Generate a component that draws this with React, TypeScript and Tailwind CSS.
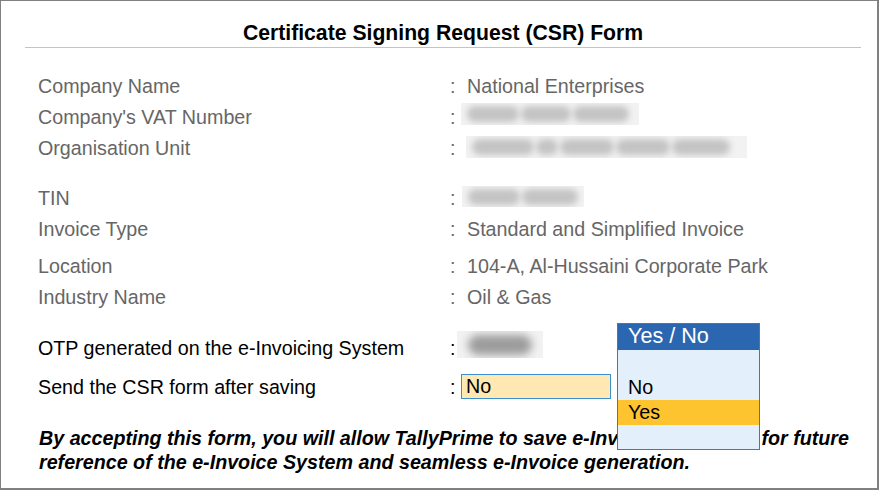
import { ReactNode } from "react";

const FONT = "font-['Liberation_Sans',Arial,sans-serif]";

interface RowProps {
    label: string;
    children?: ReactNode;
    dark?: boolean;
    className?: string;
}

function Row({ label, children, dark, className = "" }: RowProps) {
    return (
        <div className={`flex h-[31px] leading-[31px] ${dark ? "text-black" : "text-[#666666]"} ${className}`}>
            <div className="w-[412px] shrink-0">{label}</div>
            <div className="w-[17px] shrink-0">:</div>
            {children}
        </div>
    );
}

// blurred-out value, a light box with soft grey blobs in it
function Blurred({ blobs, className, dark }: { blobs: number[]; className: string; dark?: boolean }) {
    return (
        <div className={`flex items-center gap-[2px] overflow-hidden bg-[#f2f2f2] px-[6px] ${className}`}>
            {blobs.map((w, i) => (
                <div
                    key={i}
                    style={{ width: w }}
                    className={`shrink-0 rounded-full ${dark ? "h-[20px] bg-[#9c9c9c] blur-[4px]" : "h-[16px] bg-[#c4c4c4] blur-[3px]"}`}
                />
            ))}
        </div>
    );
}

export default function App() {
    return (
        <div className={`relative h-[490px] w-[879px] border-t border-l border-r-2 border-b-2 border-[#808080] bg-white text-[19.7px] ${FONT}`}>
            <div className="pt-[18px]">
                <div className="ml-[24px] h-[29px] w-[836px] border-b border-[#c4c4c4] text-center text-[21.2px] font-bold leading-[28px] text-black">
                    Certificate Signing Request (CSR) Form
                </div>
            </div>

            <div className="mt-[23px] pl-[37px]">
                <Row label="Company Name">National Enterprises</Row>
                <Row label="Company's VAT Number">
                    <Blurred blobs={[52, 50, 56]} className="-ml-[6px] mt-[1px] h-[22px] w-[178px]" />
                </Row>
                <Row label="Organisation Unit">
                    <Blurred blobs={[62, 22, 54, 54, 58]} className="-ml-[1px] mt-[3px] h-[22px] w-[281px]" />
                </Row>

                <Row label="TIN" className="mt-[19px]">
                    <Blurred blobs={[52, 56]} className="-ml-[5px] mt-[3px] h-[21px] w-[122px]" />
                </Row>
                <Row label="Invoice Type">Standard and Simplified Invoice</Row>
                <Row label="Location" className="mt-[6px]">104-A, Al-Hussaini Corporate Park</Row>
                <Row label="Industry Name">Oil &amp; Gas</Row>

                <Row label="OTP generated on the e-Invoicing System" dark className="mt-[20px]">
                    <Blurred blobs={[64]} dark className="-ml-[10px] -mt-[2px] h-[27px] w-[86px] justify-center" />
                </Row>
                <Row label="Send the CSR form after saving" dark className="mt-[8px]">
                    <div className="-ml-[6px] mt-[2px] h-[25px] w-[150px] border border-[#3b8fd3] bg-[#ffe8b1] pl-[4px] leading-[23px] text-black">
                        No
                    </div>
                </Row>

                <p className="mt-[23px] pl-px font-bold italic leading-[24px] text-black">
                    By accepting this form, you will allow TallyPrime to save e-Invoice certificate for future
                    <br />
                    reference of the e-Invoice System and seamless e-Invoice generation.
                </p>
            </div>

            {/* Yes / No picker */}
            <div className="absolute left-[616px] top-[322px] w-[143px] border border-[#6f6f6f] bg-[#e3effa] text-[19.7px] text-black">
                <div className="h-[26px] bg-[#2b66b0] pl-[10px] text-[21.6px] leading-[24px] text-white">Yes / No</div>
                <div className="h-[25px]" />
                <div className="h-[25px] pl-[10px] leading-[25px]">No</div>
                <div className="h-[25px] bg-[#fec42f] pl-[10px] leading-[25px]">Yes</div>
                <div className="h-[24px]" />
            </div>
        </div>
    );
}
